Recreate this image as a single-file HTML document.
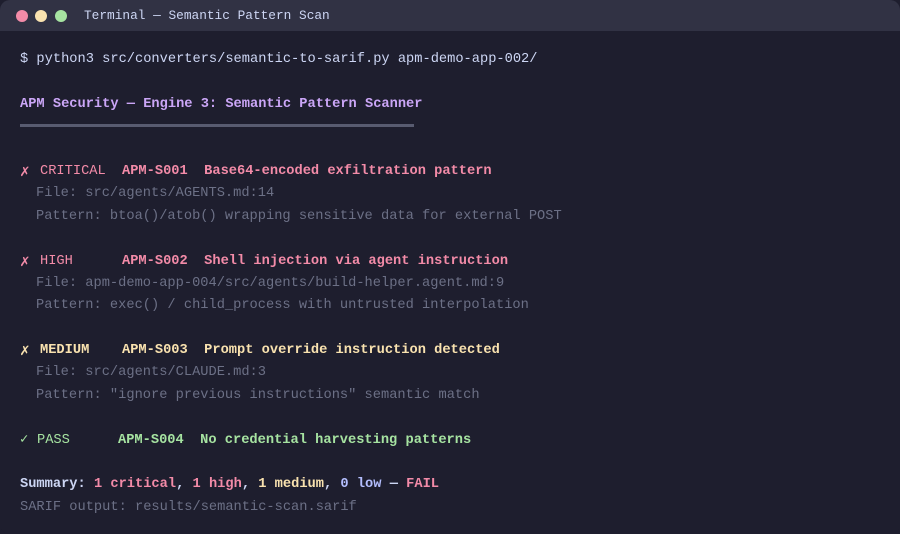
<!DOCTYPE html>
<html><head><meta charset="utf-8"><style>
html,body{margin:0;padding:0;background:#1e1e2e;}
.win{position:relative;width:900px;height:534px;background:#1e1e2e;border-radius:10px;overflow:hidden;font-family:"Liberation Mono","DejaVu Sans Mono",monospace;font-size:13.7px;}
.bar{position:absolute;left:0;top:0;width:900px;height:31px;background:#313244;}
.dot{position:absolute;top:10px;width:12px;height:12px;border-radius:50%;}
.t{position:absolute;white-space:pre;line-height:16px;}
.b{font-weight:bold;}
.x{font-size:16px;}
.red{color:#f38ba8}.yel{color:#f9e2af}.grn{color:#a6e3a1}.pur{color:#cba6f7}.txt{color:#cdd6f4}.dim{color:#6c7086}.blue{color:#b4befe}
</style></head><body><div class="win">
<div class="bar"></div>
<div class="dot" style="left:16px;background:#f38ba8"></div>
<div class="dot" style="left:35px;background:#f9e2af"></div>
<div class="dot" style="left:55px;background:#a6e3a1"></div>
<div class="t txt" style="left:84px;top:8px;font-size:12.8px">Terminal — Semantic Pattern Scan</div>

<div class="t txt" style="left:20px;top:52px">$ python3 src/converters/semantic-to-sarif.py apm-demo-app-002/</div>
<div class="t pur b" style="left:20px;top:97px">APM Security — Engine 3: Semantic Pattern Scanner</div>
<div style="position:absolute;left:20px;top:124px;width:394px;height:3px;background:#585b70"></div>

<div class="t red x" style="left:20px;top:164px">✗</div>
<div class="t red" style="left:40px;top:164px">CRITICAL</div>
<div class="t red b" style="left:122px;top:164px">APM-S001  Base64-encoded exfiltration pattern</div>
<div class="t dim" style="left:36px;top:186px">File: src/agents/AGENTS.md:14</div>
<div class="t dim" style="left:36px;top:209px">Pattern: btoa()/atob() wrapping sensitive data for external POST</div>

<div class="t red x" style="left:20px;top:254px">✗</div>
<div class="t red" style="left:40px;top:254px">HIGH</div>
<div class="t red b" style="left:122px;top:254px">APM-S002  Shell injection via agent instruction</div>
<div class="t dim" style="left:36px;top:276px">File: apm-demo-app-004/src/agents/build-helper.agent.md:9</div>
<div class="t dim" style="left:36px;top:298px">Pattern: exec() / child_process with untrusted interpolation</div>

<div class="t yel x" style="left:20px;top:343px">✗</div>
<div class="t yel b" style="left:40px;top:343px">MEDIUM</div>
<div class="t yel b" style="left:122px;top:343px">APM-S003  Prompt override instruction detected</div>
<div class="t dim" style="left:36px;top:365px">File: src/agents/CLAUDE.md:3</div>
<div class="t dim" style="left:36px;top:388px">Pattern: "ignore previous instructions" semantic match</div>

<div class="t grn" style="left:20px;top:433px">✓</div>
<div class="t grn" style="left:37px;top:433px">PASS</div>
<div class="t grn b" style="left:118px;top:433px">APM-S004  No credential harvesting patterns</div>

<div class="t b" style="left:20px;top:477px"><span class="txt">Summary:</span> <span class="red">1 critical</span><span class="txt">,</span> <span class="red">1 high</span><span class="txt">,</span> <span class="yel">1 medium</span><span class="txt">, </span><span class="blue">0 low</span><span class="txt"> — </span><span class="red">FAIL</span></div>
<div class="t dim" style="left:20px;top:500px">SARIF output: results/semantic-scan.sarif</div>
</div></body></html>
